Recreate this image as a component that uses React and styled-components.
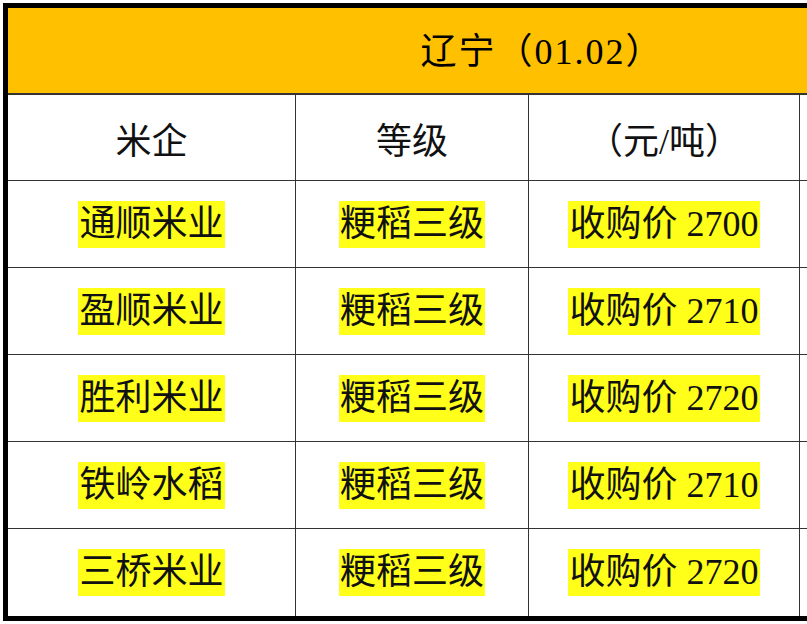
import styled, { createGlobalStyle } from "styled-components";

const GlobalStyle = createGlobalStyle`
  html, body {
    margin: 0;
    padding: 0;
    background: #fff;
  }
  body {
    width: 807px;
    height: 624px;
    overflow: hidden;
  }
`;

const Page = styled.div`
  width: 807px;
  height: 624px;
  padding: 3px 0 0 3px;
  box-sizing: border-box;
  overflow: hidden;
  font-family: "Liberation Serif", "Noto Sans CJK SC", serif;
  color: #111;
`;

const Table = styled.div`
  display: grid;
  grid-template-columns: 288px 233px 271px 254px;
  grid-template-rows: 87px 86px repeat(5, 87px);
  width: max-content;
  border-top: 5px solid #000;
  border-left: 5px solid #000;
  border-bottom: 5px solid #000;
`;

const Title = styled.div`
  grid-column: 1 / -1;
  display: flex;
  align-items: center;
  justify-content: center;
  background: #ffc000;
  border-bottom: 2px solid #333;
  box-sizing: border-box;
  font-size: 36px;
  letter-spacing: 2px;
  color: #000;
  padding: 0 0 6px 22px;
`;

const Cell = styled.div`
  display: flex;
  align-items: center;
  justify-content: center;
  box-sizing: border-box;
  border-right: 1px solid #333;
  border-bottom: ${(p) => (p.$last ? "none" : "1px solid #333")};
  font-size: 36px;
  background: #fff;
`;

const Mark = styled.span`
  background: #ffff1a;
  line-height: 47px;
  padding: 0 1px;
  white-space: nowrap;
`;

const rows = [
  ["通顺米业", "粳稻三级", "收购价 2700"],
  ["盈顺米业", "粳稻三级", "收购价 2710"],
  ["胜利米业", "粳稻三级", "收购价 2720"],
  ["铁岭水稻", "粳稻三级", "收购价 2710"],
  ["三桥米业", "粳稻三级", "收购价 2720"],
];

export default function App() {
  return (
    <>
      <GlobalStyle />
      <Page>
        <Table>
          <Title>辽宁（01.02）</Title>
          <Cell>米企</Cell>
          <Cell>等级</Cell>
          <Cell>（元/吨）</Cell>
          <Cell />
          {rows.map((r, i) => {
            const last = i === rows.length - 1;
            return [
              ...r.map((t, j) => (
                <Cell key={`${i}-${j}`} $last={last}>
                  <Mark>{t}</Mark>
                </Cell>
              )),
              <Cell key={`${i}-x`} $last={last} />,
            ];
          })}
        </Table>
      </Page>
    </>
  );
}
